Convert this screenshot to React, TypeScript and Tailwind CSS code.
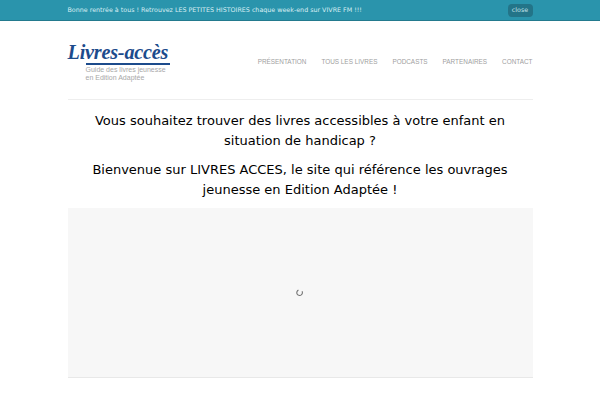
export default function App() {
  const nav = ["PRÉSENTATION", "TOUS LES LIVRES", "PODCASTS", "PARTENAIRES", "CONTACT"];
  return (
    <div className="w-[600px] h-[400px] overflow-hidden bg-white font-['DejaVu_Sans',sans-serif]">
      <div className="h-[20px] bg-[#2a94ac] border-b border-[#237a8e] box-content">
        <div className="w-[465px] mx-auto flex items-center justify-between h-[20px]">
          <span className="text-[6.35px] text-[#d8eef3]">Bonne rentrée à tous ! Retrouvez LES PETITES HISTOIRES chaque week-end sur VIVRE FM !!!</span>
          <span className="h-[13px] w-[25px] rounded-sm bg-[#237488] text-[#c4e2e9] text-[6.35px] flex items-center justify-center">close</span>
        </div>
      </div>
      <div className="w-[465px] mx-auto">
        <div className="h-[78px] flex items-center justify-between border-b border-[#eeeeee] box-content">
          <div className="w-[102px] flex flex-col mt-[4px]">
            <div className="text-[20.2px] leading-[20px] italic font-bold text-[#1c4b8c] font-['Liberation_Serif',serif] whitespace-nowrap tracking-[-0.2px]">Livres-accès</div>
            <div className="ml-[18px] h-[1.5px] bg-[#1c4b8c] mt-px"></div>
            <div className="ml-[18px] text-[7px] leading-[8px] mt-px text-[#a8a8a8] font-['Liberation_Sans',sans-serif] whitespace-nowrap">Guide des livres jeunesse<br />en Edition Adaptée</div>
          </div>
          <div className="flex gap-[15px] text-[6.4px] text-[#a0a0a0] font-['Liberation_Sans',sans-serif] mt-[4px]">
            {nav.map((n) => <span key={n}>{n}</span>)}
          </div>
        </div>
        <div className="pt-[11px] text-center text-[13px] leading-[19.5px] text-[#000000]">
          <p>Vous souhaitez trouver des livres accessibles à votre enfant en<br />situation de handicap ?</p>
          <p className="mt-[10px]">Bienvenue sur LIVRES ACCES, le site qui référence les ouvrages<br />jeunesse en Edition Adaptée !</p>
        </div>
        <div className="mt-[9px] h-[170px] bg-[#f7f7f7] border-b border-[#e8e8e8] flex items-center justify-center">
          <svg width="7" height="7" viewBox="0 0 10 10" fill="none" stroke="#777" strokeWidth="1.6" className="-ml-[2px]">
            <path d="M3.5 1.6A4 4 0 1 0 8.6 3.2" />
          </svg>
        </div>
      </div>
    </div>
  );
}
